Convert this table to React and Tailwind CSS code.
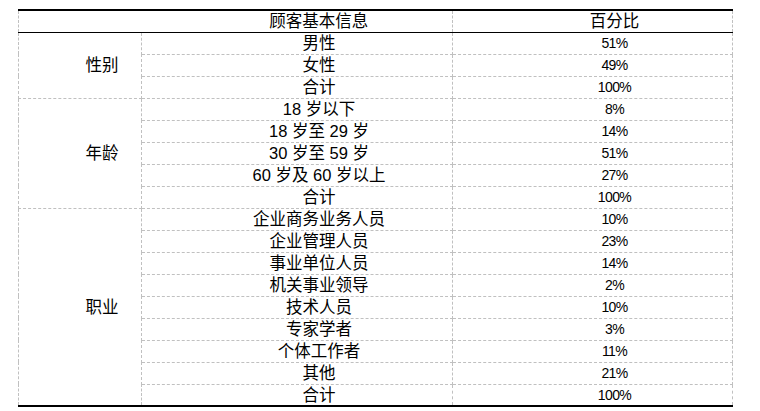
import React from 'react';

const groups = [
  {
    name: '性别',
    rows: [
      ['男性', '51%'],
      ['女性', '49%'],
      ['合计', '100%'],
    ],
  },
  {
    name: '年龄',
    rows: [
      ['18 岁以下', '8%'],
      ['18 岁至 29 岁', '14%'],
      ['30 岁至 59 岁', '51%'],
      ['60 岁及 60 岁以上', '27%'],
      ['合计', '100%'],
    ],
  },
  {
    name: '职业',
    rows: [
      ['企业商务业务人员', '10%'],
      ['企业管理人员', '23%'],
      ['事业单位人员', '14%'],
      ['机关事业领导', '2%'],
      ['技术人员', '10%'],
      ['专家学者', '3%'],
      ['个体工作者', '11%'],
      ['其他', '21%'],
      ['合计', '100%'],
    ],
  },
];

const cell = 'border border-dashed border-[#c0c0c0] p-0 pl-[44px] text-center align-middle font-normal';

const App = () => {
  return (
    <div className="bg-white w-[760px] h-[411px] overflow-hidden pt-[9px] pl-[18px] text-black font-['Liberation_Sans','Noto_Sans_CJK_SC',sans-serif]">
      <table className="border-collapse table-fixed w-[714px] border-y-2 border-black">
        <colgroup>
          <col className="w-[123px]" />
          <col className="w-[311px]" />
          <col className="w-[280px]" />
        </colgroup>
        <thead>
          <tr className="h-[22px] border-b border-black">
            <th className="border-l border-dashed border-[#c0c0c0] p-0"></th>
            <th className="border-r border-dashed border-[#c0c0c0] p-0 pl-[44px] text-center font-normal text-[16.5px] leading-[20px]">
              顾客基本信息
            </th>
            <th className="border-r border-dashed border-[#c0c0c0] p-0 pl-[44px] text-center font-normal text-[16.5px] leading-[20px]">
              百分比
            </th>
          </tr>
        </thead>
        <tbody>
          {groups.map((group) =>
            group.rows.map((row, i) => (
              <tr key={group.name + i} className="h-[22px]">
                {i === 0 && (
                  <td rowSpan={group.rows.length} className={`${cell} text-[16.5px] leading-[20px]`}>
                    {group.name}
                  </td>
                )}
                <td className={`${cell} text-[16.5px] leading-[20px]`}>{row[0]}</td>
                <td className={`${cell} text-[14px] tracking-[-0.6px] leading-[20px]`}>{row[1]}</td>
              </tr>
            ))
          )}
        </tbody>
      </table>
    </div>
  );
};

export default App;
